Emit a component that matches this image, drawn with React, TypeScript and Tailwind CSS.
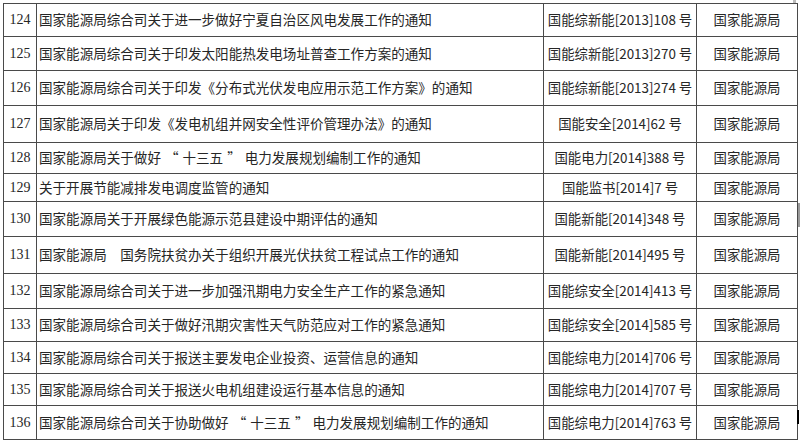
import type { ReactNode } from 'react';

const Q = ({ children }: { children: ReactNode }) => <span className="px-[4px]">{children}</span>;

const rows: [string, ReactNode, string, number][] = [
  ['124', '国家能源局综合司关于进一步做好宁夏自治区风电发展工作的通知', '国能综新能[2013]108 号', 33],
  ['125', '国家能源局综合司关于印发太阳能热发电场址普查工作方案的通知', '国能综新能[2013]270 号', 34],
  ['126', '国家能源局综合司关于印发《分布式光伏发电应用示范工作方案》的通知', '国能综新能[2013]274 号', 35],
  ['127', '国家能源局关于印发《发电机组并网安全性评价管理办法》的通知', '国能安全[2014]62 号', 37],
  ['128', <>国家能源局关于做好<Q>“</Q>十三五<Q>”</Q>电力发展规划编制工作的通知</>, '国能电力[2014]388 号', 31],
  ['129', '关于开展节能减排发电调度监管的通知', '国能监书[2014]7 号', 28],
  ['130', '国家能源局关于开展绿色能源示范县建设中期评估的通知', '国能新能[2014]348 号', 35],
  ['131', '国家能源局　国务院扶贫办关于组织开展光伏扶贫工程试点工作的通知', '国能新能[2014]495 号', 37],
  ['132', '国家能源局综合司关于进一步加强汛期电力安全生产工作的紧急通知', '国能综安全[2014]413 号', 35],
  ['133', '国家能源局综合司关于做好汛期灾害性天气防范应对工作的紧急通知', '国能综安全[2014]585 号', 33],
  ['134', '国家能源局综合司关于报送主要发电企业投资、运营信息的通知', '国能综电力[2014]706 号', 32],
  ['135', '国家能源局综合司关于报送火电机组建设运行基本信息的通知', '国能综电力[2014]707 号', 32],
  ['136', <>国家能源局综合司关于协助做好<Q>“</Q>十三五<Q>”</Q>电力发展规划编制工作的通知</>, '国能综电力[2014]763 号', 34],
];

const cjk = "font-['Noto_Sans_CJK_SC',sans-serif]";

export default function App() {
  return (
    <div className="relative w-[800px] h-[448px] bg-white overflow-hidden">
      <div className="pt-[3px] pl-[3px]">
        <table className="border-collapse w-[794px] table-fixed text-[#262626]" lang="zh-CN">
          <colgroup>
            <col className="w-[33px]" />
            <col className="w-[507px]" />
            <col className="w-[153px]" />
            <col className="w-[101px]" />
          </colgroup>
          <tbody>
            {rows.map(([no, title, doc, h]) => (
              <tr key={no} style={{ height: h }}>
                <td className="border border-[#4a4a4a] text-center p-0 font-['Liberation_Serif',serif] text-[14px] leading-none">
                  {no}
                </td>
                <td className={`border border-[#4a4a4a] pl-[2px] p-0 text-[13.55px] leading-none whitespace-nowrap ${cjk}`}>
                  {title}
                </td>
                <td className={`border border-[#4a4a4a] text-center p-0 text-[13.4px] leading-none whitespace-nowrap ${cjk}`}>
                  {doc}
                </td>
                <td className={`border border-[#4a4a4a] text-center p-0 text-[13.4px] leading-none whitespace-nowrap ${cjk}`}>
                  国家能源局
                </td>
              </tr>
            ))}
          </tbody>
        </table>
      </div>
      <div className="absolute left-[793px] top-0 w-[3px] h-[3px] bg-[#bbb]" />
      <div className="absolute left-[798px] top-[203px] w-[2px] h-[24px] bg-[#999]" />
      <div className="absolute left-[797px] top-[410px] w-[2px] h-[14px] bg-black" />
    </div>
  );
}
